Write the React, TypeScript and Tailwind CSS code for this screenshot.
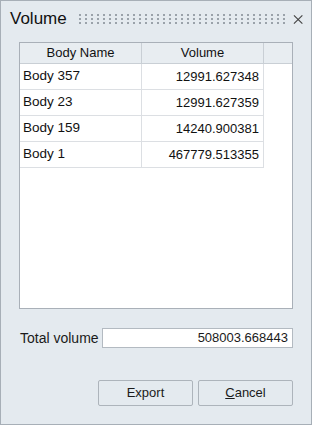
const rows = [
  { name: 'Body 357', volume: '12991.627348' },
  { name: 'Body 23', volume: '12991.627359' },
  { name: 'Body 159', volume: '14240.900381' },
  { name: 'Body 1', volume: '467779.513355' },
];

function Grip() {
  return (
    <svg width="206" height="12" className="block">
      <defs>
        <pattern id="grip" width="6" height="4" patternUnits="userSpaceOnUse">
          <rect x="0" y="0" width="2" height="2" fill="#9aa2aa" />
        </pattern>
      </defs>
      <rect x="0" y="0" width="206" height="10" fill="url(#grip)" />
    </svg>
  );
}

export default function App() {
  return (
    <div
      className="w-[312px] h-[425px] box-border border border-[#a7afb7] bg-[#e4eaef] flex flex-col text-[13px] text-[#1a1a1a]"
      style={{ fontFamily: '"Segoe UI", "Liberation Sans", Arial, sans-serif' }}
    >
      {/* ── Title bar ── */}
      <div className="h-[41px] flex items-start pt-[7px] pl-[9px] pr-[8px]">
        <span className="text-[17px] leading-[22px] text-[#111]">Volume</span>
        <div className="ml-[12px] mt-[6px]">
          <Grip />
        </div>
        <svg width="11" height="11" viewBox="0 0 11 11" className="ml-[8px] mt-[6px]">
          <path d="M1 1 L10 10 M10 1 L1 10" stroke="#444" strokeWidth="1.2" fill="none" />
        </svg>
      </div>

      {/* ── Table ── */}
      <div className="ml-[18px] w-[274px] h-[267px] box-border border border-[#a9b0b8] bg-white flex flex-col">
        <div className="flex h-[21px] box-border border-b border-[#c9cfd5] bg-[#e8edf1] text-[#111]">
          <div className="w-[122px] box-border border-r border-[#c9cfd5] flex items-center justify-center">Body Name</div>
          <div className="w-[122px] box-border border-r border-[#c9cfd5] flex items-center justify-center">Volume</div>
          <div className="flex-1" />
        </div>
        {rows.map(r => (
          <div key={r.name} className="flex w-[244px] h-[26px] box-border border-b border-[#dcdfe3] text-[#111]">
            <div className="w-[122px] box-border border-r border-[#dcdfe3] flex items-center pl-[3px] text-[13.5px]">{r.name}</div>
            <div className="w-[122px] box-border border-r border-[#dcdfe3] flex items-center justify-end pr-[4px] text-[13px]">{r.volume}</div>
          </div>
        ))}
      </div>

      {/* ── Total ── */}
      <div className="flex items-center mt-[19px] ml-[19px] h-[20px]">
        <span className="w-[82px] text-[14px]">Total volume</span>
        <div className="w-[191px] h-[20px] box-border border border-[#b3bac1] bg-white flex items-center justify-end pr-[4px] text-[13px]">
          508003.668443
        </div>
      </div>

      {/* ── Buttons ── */}
      <div className="flex justify-end gap-[5px] mt-[32px] pr-[18px]">
        <button className="w-[95px] h-[26px] box-border border border-[#adb4bb] rounded-[2px] bg-[#e4eaef] text-[13px]">Export</button>
        <button className="w-[95px] h-[26px] box-border border border-[#adb4bb] rounded-[2px] bg-[#e4eaef] text-[13px]">
          <span className="underline">C</span>ancel
        </button>
      </div>
    </div>
  );
}
